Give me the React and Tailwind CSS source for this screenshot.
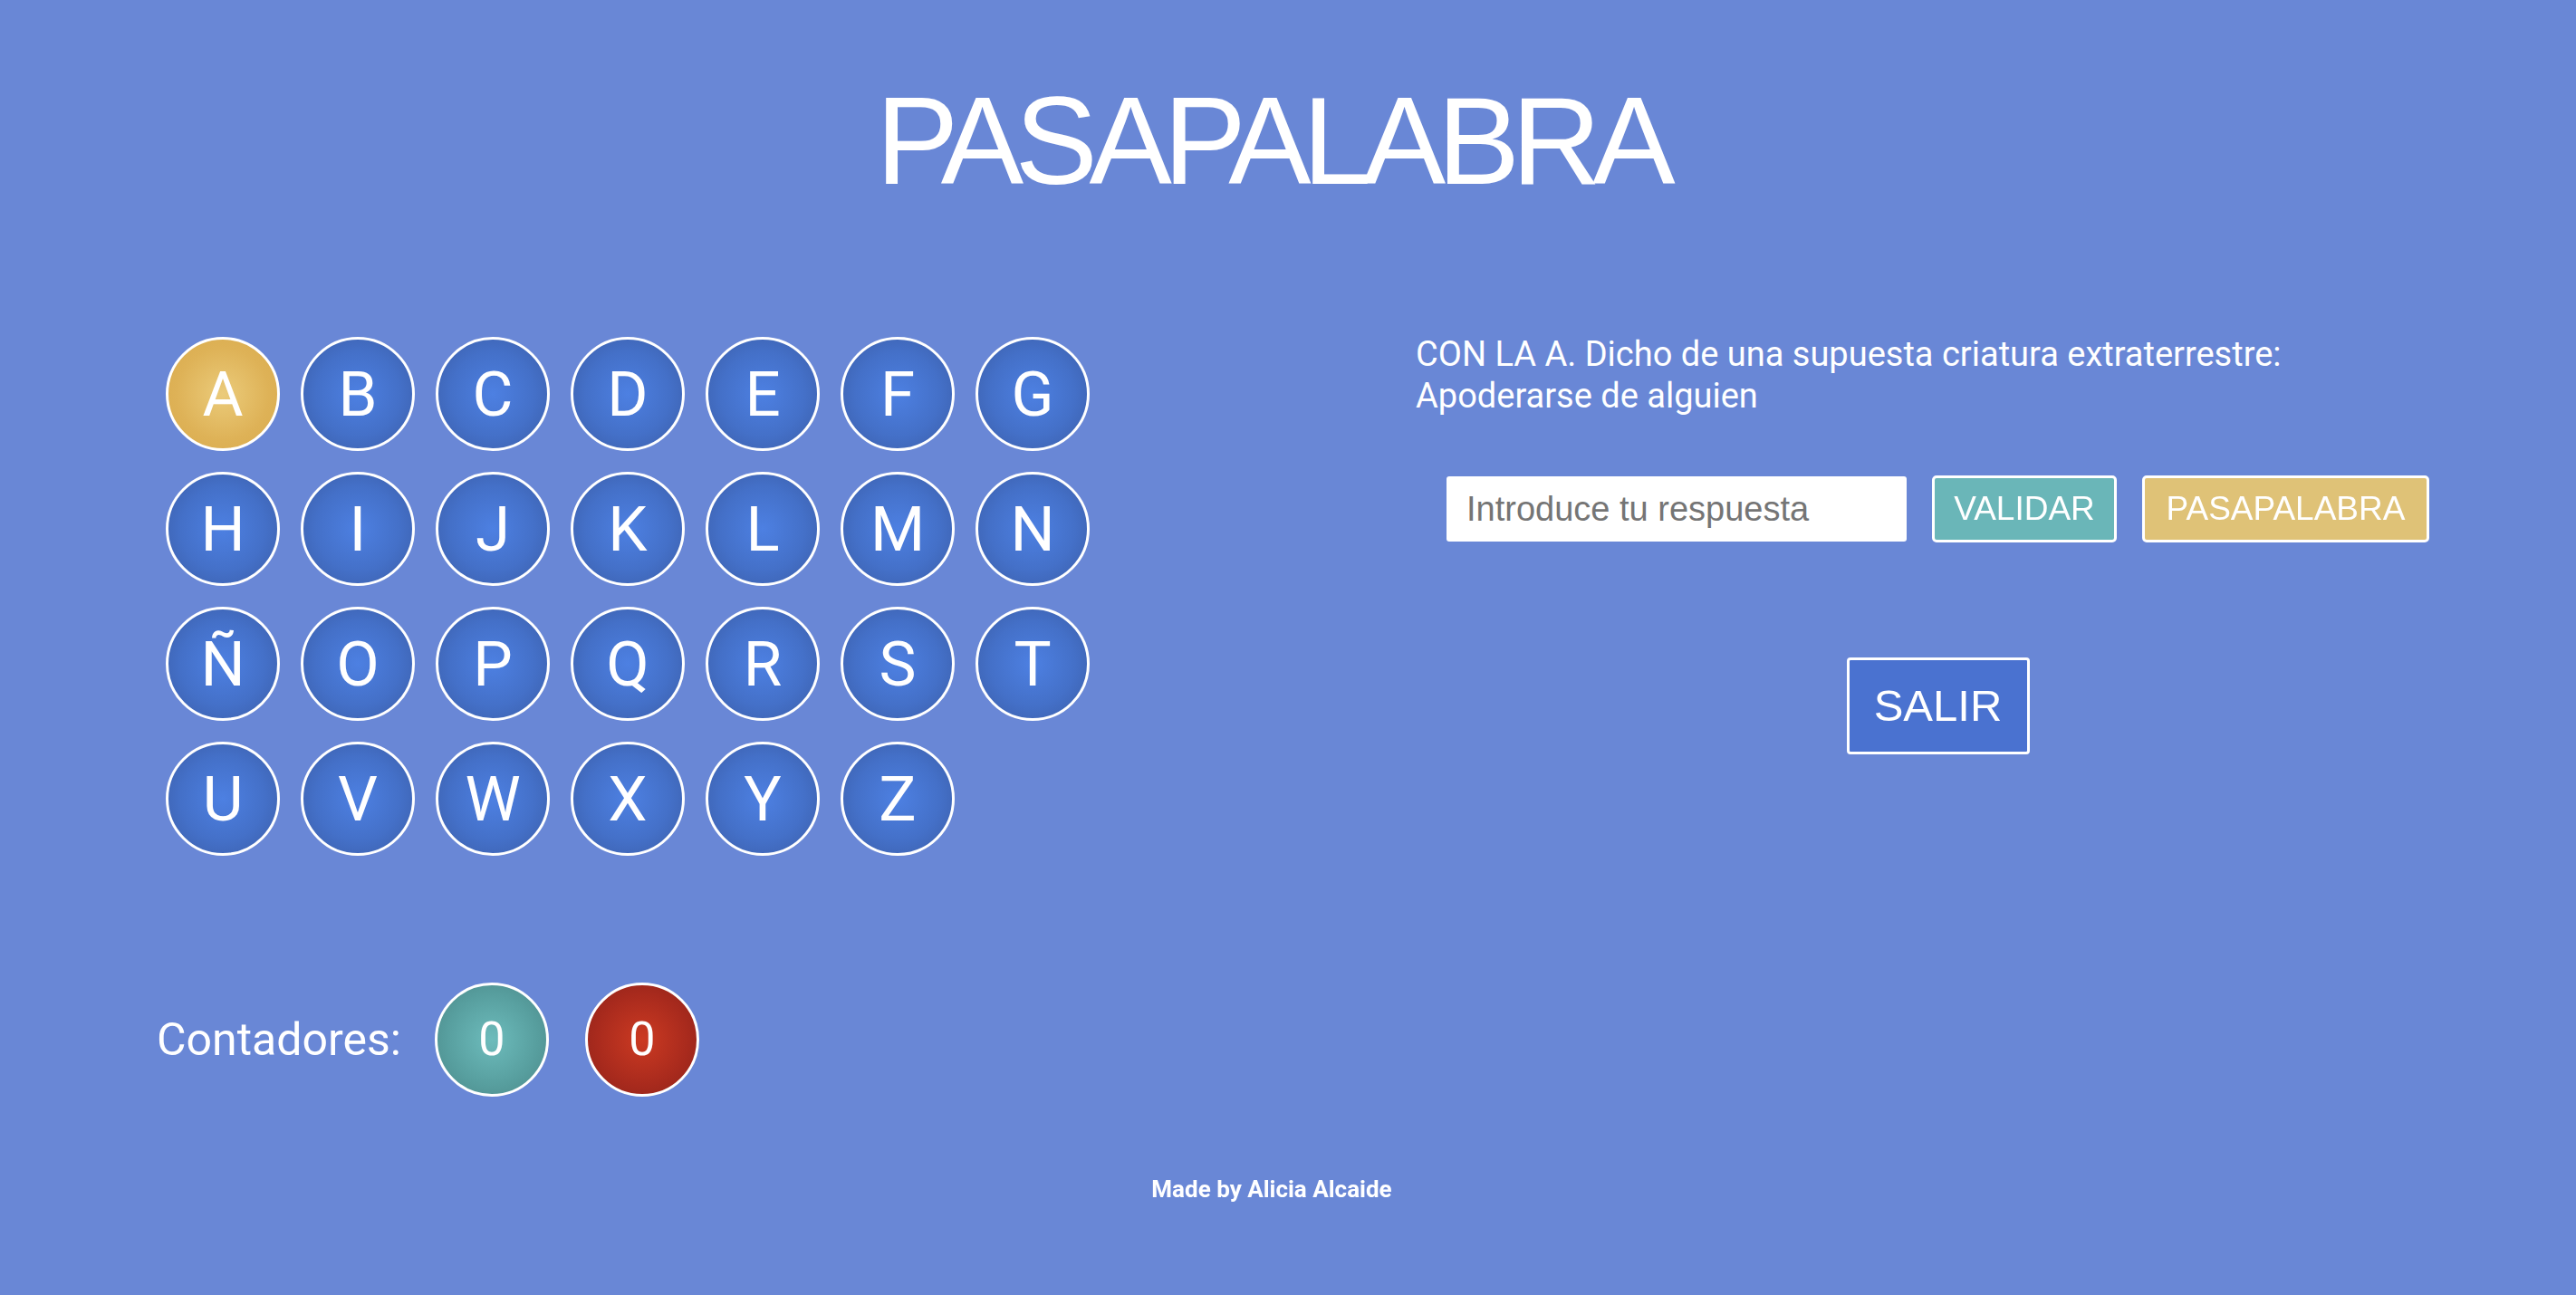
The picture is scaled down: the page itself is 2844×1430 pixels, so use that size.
import React from 'react'

const LETTERS = ['A','B','C','D','E','F','G','H','I','J','K','L','M','N','Ñ','O','P','Q','R','S','T','U','V','W','X','Y','Z']

function Letter({ letter, active }) {
  return (
    <div
      className={
        'flex h-[126px] w-[126px] items-center justify-center rounded-full border-[3px] border-white text-[69px] leading-none text-white ' +
        (active
          ? 'bg-[radial-gradient(circle,#ebcb7a_0%,#deb257_60%,#d8aa4c_100%)]'
          : 'bg-[radial-gradient(circle,#4d80e2_0%,#4470c8_55%,#3a5ca6_100%)]')
      }
    >
      {letter}
    </div>
  )
}

export default function App() {
  return (
    <div className="min-h-screen w-full bg-[#6987d6] font-['Roboto',sans-serif] text-white">
      <h1 className="pr-[37px] pt-[87px] text-center font-['Liberation_Sans',Arial,sans-serif] text-[137px] leading-none tracking-[-0.069em]">
        PASAPALABRA
      </h1>

      <div className="mt-[144px] flex">
        <section className="w-[1563px] shrink-0 pl-[173px]">
          <div className="ml-[10px] mt-[4px] grid w-fit grid-cols-[repeat(7,126px)] gap-x-[23px] gap-y-[23px]">
            {LETTERS.map((l, i) => (
              <Letter key={l} letter={l} active={i === 0} />
            ))}
          </div>

          <div className="mt-[140px] flex items-center">
            <span className="text-[50px] leading-none">Contadores:</span>
            <div className="ml-[37px] flex h-[126px] w-[126px] items-center justify-center rounded-full border-[3px] border-white bg-[radial-gradient(circle,#6dbcbc_0%,#579e9e_60%,#4a8787_100%)] text-[52px] leading-none">
              0
            </div>
            <div className="ml-[40px] flex h-[126px] w-[126px] items-center justify-center rounded-full border-[3px] border-white bg-[radial-gradient(circle,#cc3a22_0%,#a82a1d_60%,#8c2219_100%)] text-[52px] leading-none">
              0
            </div>
          </div>
        </section>

        <section className="flex-1">
          <p className="text-[38px] leading-[46px]">
            CON LA A. Dicho de una supuesta criatura extraterrestre:
            <br />
            Apoderarse de alguien
          </p>

          <div className="ml-[34px] mt-[65px] flex w-fit flex-col items-center">
            <div className="flex items-center gap-[28px] font-['Liberation_Sans',Arial,sans-serif]">
              <input
                type="text"
                autoFocus
                placeholder="Introduce tu respuesta"
                className="h-[72px] w-[508px] rounded-[3px] bg-white pl-[22px] text-[38px] text-[#333] caret-black outline-none placeholder:text-[#757575]"
              />
              <button className="h-[74px] w-[204px] rounded-[5px] border-[3px] border-white bg-[#6ab6b8] text-[37px] text-white">
                VALIDAR
              </button>
              <button className="h-[74px] w-[317px] rounded-[5px] border-[3px] border-white bg-[#dfc277] text-[37px] text-white">
                PASAPALABRA
              </button>
            </div>
            <button className="mt-[127px] h-[107px] w-[202px] rounded-[4px] border-[3px] border-white bg-[#4a72d0] font-['Liberation_Sans',Arial,sans-serif] text-[49px] text-white">
              SALIR
            </button>
          </div>
        </section>
      </div>

      <footer className="mt-[83px] pb-[60px] pr-[36px] text-center text-[26px] font-bold">
        Made by Alicia Alcaide
      </footer>
    </div>
  )
}
